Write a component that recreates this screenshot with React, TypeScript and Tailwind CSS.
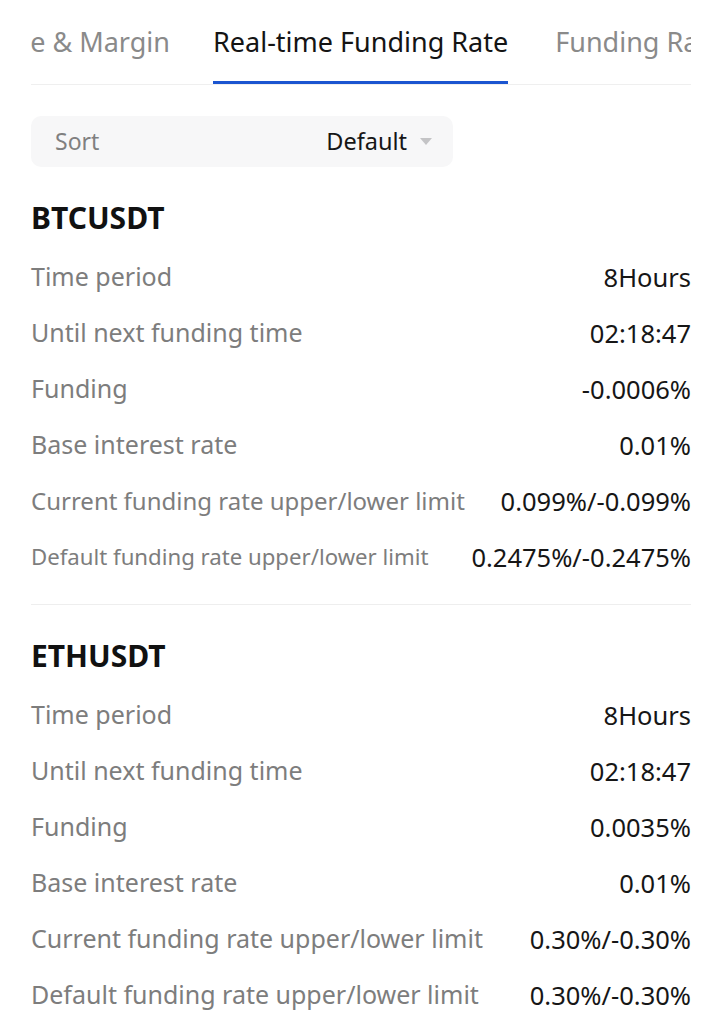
import React from "react";

type Row = { label: string; value: string; labelClass?: string };

const btc: Row[] = [
  { label: "Time period", value: "8Hours" },
  { label: "Until next funding time", value: "02:18:47" },
  { label: "Funding", value: "-0.0006%" },
  { label: "Base interest rate", value: "0.01%" },
  { label: "Current funding rate upper/lower limit", value: "0.099%/-0.099%", labelClass: "text-[24px]" },
  { label: "Default funding rate upper/lower limit", value: "0.2475%/-0.2475%", labelClass: "text-[22.2px]" },
];

const eth: Row[] = [
  { label: "Time period", value: "8Hours" },
  { label: "Until next funding time", value: "02:18:47" },
  { label: "Funding", value: "0.0035%" },
  { label: "Base interest rate", value: "0.01%" },
  { label: "Current funding rate upper/lower limit", value: "0.30%/-0.30%" },
  { label: "Default funding rate upper/lower limit", value: "0.30%/-0.30%" },
];

function Section({ symbol, rows }: { symbol: string; rows: Row[] }) {
  return (
    <div className="pt-[22px]">
      <div className="h-[56px] flex items-center text-[30px] font-bold text-[#111111]">{symbol}</div>
      <div className="pt-[4px]">
        {rows.map((r) => (
          <div key={r.label} className="h-[56px] flex items-center justify-between gap-4">
            <span className={`${r.labelClass ?? "text-[25px]"} text-[#7d7d7d] whitespace-nowrap`}>{r.label}</span>
            <span className="text-[25.5px] text-[#161616] whitespace-nowrap">{r.value}</span>
          </div>
        ))}
      </div>
    </div>
  );
}

export default function App() {
  return (
    <div
      className="w-[722px] min-h-[1024px] bg-white px-[31px] overflow-hidden"
      style={{ fontFamily: '"Noto Sans", "Open Sans", sans-serif' }}
    >
      {/* Tabs */}
      <div className="flex gap-[47px] h-[84px] overflow-hidden text-[27px] whitespace-nowrap">
        <div className="w-[139px] mr-[-4px] flex justify-end overflow-hidden shrink-0">
          <div className="h-[81px] flex items-center pt-[3px] text-[#8a8a8a]">Leverage &amp; Margin</div>
        </div>
        <div className="flex flex-col shrink-0">
          <div className="h-[81px] flex items-center pt-[3px] text-[#141414]">Real-time Funding Rate</div>
          <div className="h-[3px] bg-[#1b55d0]" />
        </div>
        <div className="h-[81px] flex items-center pt-[3px] text-[#8a8a8a] shrink-0">Funding Rate History</div>
      </div>
      <div className="h-px bg-[#efefef]" />

      {/* Sort */}
      <div className="mt-[31px] w-[422px] h-[51px] rounded-[10px] bg-[#f7f7f8] flex items-center justify-between pl-[24px] pr-[21px]">
        <span className="text-[23px] text-[#808080]">Sort</span>
        <span className="flex items-center gap-[13px]">
          <span className="text-[23.5px] text-[#161616]">Default</span>
          <svg width="12" height="8" viewBox="0 0 12 8">
            <path d="M0 0 L12 0 L6 7 Z" fill="#c4c4c6" />
          </svg>
        </span>
      </div>

      <Section symbol="BTCUSDT" rows={btc} />
      <div className="mt-[19px] h-px bg-[#eeeeee]" />
      <Section symbol="ETHUSDT" rows={eth} />
    </div>
  );
}
